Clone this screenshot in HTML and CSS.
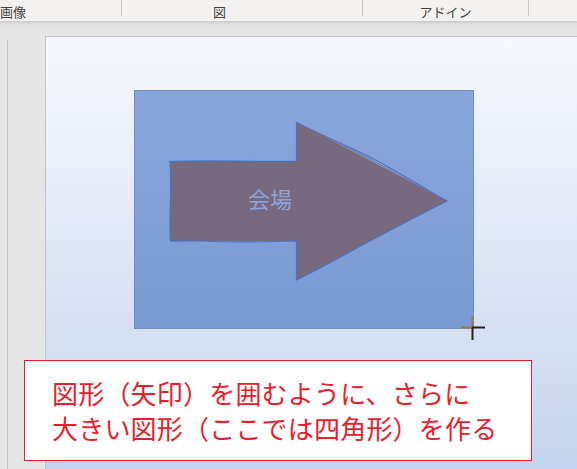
FILE: index.html
```html
<!DOCTYPE html>
<html lang="ja">
<head>
<meta charset="UTF-8">
<meta name="viewport" content="width=device-width, initial-scale=1.0">
<title>図形の作成</title>
<link rel="stylesheet" href="styles.css">
</head>
<body>

<div class="ribbon">
  <div class="group group-image">画像</div>
  <div class="group group-shape">図</div>
  <div class="group group-addin">アドイン</div>
  <div class="group group-rest"></div>
</div>

<div class="workspace">
  <div class="thumbs"></div>
  <div class="slide">
    <svg class="canvas" viewBox="46 37 531 432" width="531" height="432">
      <defs>
        <linearGradient id="boxFill" x1="0" y1="0" x2="0" y2="1">
          <stop offset="0" stop-color="#88a6db"/>
          <stop offset="1" stop-color="#7a9ad4"/>
        </linearGradient>
      </defs>
      <!-- outer rectangle -->
      <rect x="134.5" y="90.5" width="339" height="238" fill="url(#boxFill)" stroke="#6f8cc3" stroke-width="1"/>
      <!-- arrow -->
      <polygon points="170,161 297,161 297,122 447,201 297,280 297,241 170,241" fill="#776a7e"/>
      <path d="M170,161.5 C210,160 250,162 296.5,161 L296.5,122.5 C330,140 360,150 390,168 C415,182 430,192 447,201 C420,214 390,230 360,246 C340,258 320,268 296.5,280 L296.5,241 C260,242 220,242 200,241 C185,240.5 178,241.5 170.5,241 C169,215 172,190 170,161.5 Z" fill="none" stroke="#4a72c6" stroke-width="1.2" stroke-linejoin="round"/>
      <path d="M298,123.5 C330,138 370,158 446,201.5" fill="none" stroke="#7a6c80" stroke-width="0.8"/>
      <text x="270" y="208" class="shape-label" text-anchor="middle">会場</text>
      <!-- cursor -->
      <line x1="472.5" y1="316" x2="472.5" y2="328" stroke="#9b7b43" stroke-width="2"/>
      <line x1="461" y1="327.5" x2="472" y2="327.5" stroke="#9b7b43" stroke-width="2"/>
      <line x1="472.5" y1="328" x2="472.5" y2="340" stroke="#2b2214" stroke-width="2"/>
      <line x1="472" y1="327.5" x2="485" y2="327.5" stroke="#2b2214" stroke-width="2"/>
    </svg>
  </div>

  <div class="note">
    図形（矢印）を囲むように、さらに<br>
    大きい図形（ここでは四角形）を作る
  </div>
</div>

</body>
</html>
```

FILE: styles.css
```css
body {
  margin: 0;
  padding: 0;
  width: 577px;
  height: 469px;
  overflow: hidden;
  background-color: #e6e6e6;
  font-family: "Noto Sans CJK JP", "Noto Sans", sans-serif;
}
.ribbon {
  display: flex;
  height: 21px;
  background-color: #f3f2f1;
  box-shadow: 0 1px 3px rgba(0, 0, 0, 0.12);
  position: relative;
  z-index: 1;
}
.group {
  font-size: 13px;
  line-height: 23px;
  color: #444;
  border-right: 1px solid #c8c6c4;
  height: 16px;
  white-space: nowrap;
}
.group-image {
  width: 121px;
}
.group-shape {
  width: 149px;
  padding-left: 91px;
}
.group-addin {
  width: 165px;
  text-align: center;
}
.group-rest {
  flex: 1;
  border-right: none;
}
.workspace {
  display: flex;
  height: 448px;
  padding-top: 15px;
  box-sizing: border-box;
  position: relative;
  background: linear-gradient(#dedede, #e6e6e6 12px);
}
.thumbs {
  width: 7px;
  margin-top: 4px;
  border-right: 1px solid #c3c3c3;
  flex-shrink: 0;
}
.slide {
  margin-left: 37px;
  flex: 1;
  border-top: 1px solid #c6c6c6;
  border-left: 1px solid #c6c6c6;
  background: linear-gradient(#f6f8fd, #eaeff9 120px, #d2ddf1 330px, #c6d3ec);
  overflow: hidden;
}
.canvas {
  display: block;
}
.shape-label {
  font-family: "Noto Sans CJK JP", sans-serif;
  font-size: 22px;
  fill: #8fa4d8;
}
.note {
  position: absolute;
  left: 24px;
  top: 339px;
  width: 479px;
  height: 73px;
  padding: 14px 0 12px 27px;
  background-color: #fff;
  border: 1px solid #e8202a;
  color: #e8202a;
  font-size: 26px;
  line-height: 35px;
  letter-spacing: 0.2px;
  white-space: nowrap;
}
```
